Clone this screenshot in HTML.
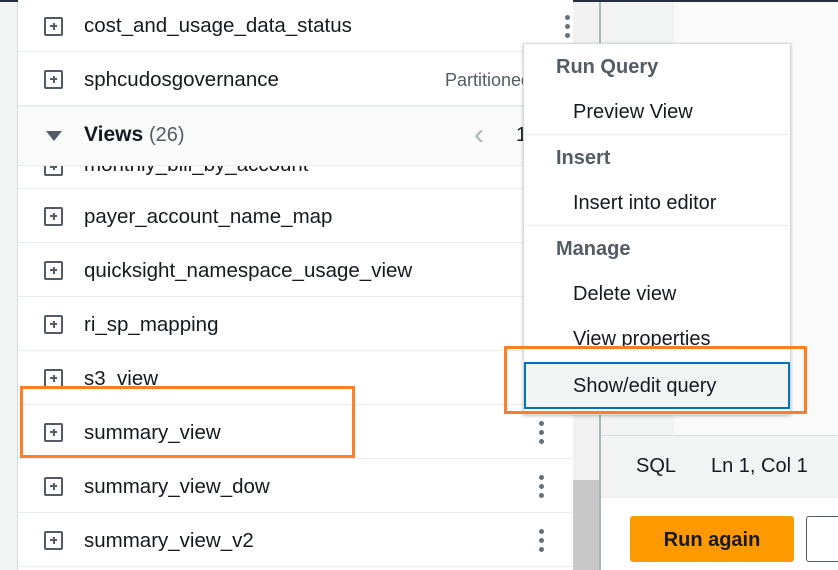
<!DOCTYPE html>
<html><head><meta charset="utf-8"><style>
*{margin:0;padding:0;box-sizing:border-box}
body{width:838px;height:570px;overflow:hidden;position:relative;background:#fafafa;font-family:"Liberation Sans",sans-serif;color:#16191f}
.abs{position:absolute}
.row{position:absolute;left:18px;width:555px;height:54px;border-bottom:1px solid #eaeded;background:#fff}
.row .ic{position:absolute;left:26px;top:50%;margin-top:-9px;width:19px;height:19px;border:2px solid #545b64;border-radius:2px}
.row .ic:before{content:"";position:absolute;left:4px;top:6.5px;width:7px;height:2px;background:#545b64}
.row .ic:after{content:"";position:absolute;left:6.5px;top:4px;width:2px;height:7px;background:#545b64}
.row .t{position:absolute;left:66px;top:1px;line-height:54px;font-size:20.5px}
.dots{position:absolute;width:4px}
.dots i{display:block;width:5px;height:5px;border-radius:50%;background:#687078;margin-bottom:4px}
.mh{position:absolute;left:32px;font-size:20px;font-weight:bold;color:#545b64}
.mi{position:absolute;left:49px;font-size:20px;color:#16191f}
</style></head><body>
<div class="abs" style="left:0;top:0;width:18px;height:570px;background:#f2f3f3;border-right:1px solid #d5dbdb"></div>
<div class="abs" style="left:18px;top:0;width:555px;height:570px;background:#fff"></div>
<div class="abs" style="left:573px;top:0;width:26px;height:570px;background:#f1f1f1"></div>
<div class="abs" style="left:573px;top:480px;width:26px;height:90px;background:#c8c8c8"></div>
<div class="abs" style="left:599px;top:0;width:2px;height:570px;background:#aab7b8"></div>
<div class="abs" style="left:601px;top:0;width:73px;height:435px;background:#f2f3f3"></div>
<div class="abs" style="left:601px;top:435px;width:237px;height:63px;background:#f2f3f3;border-top:1px solid #d5dbdb;border-bottom:1px solid #eaeded"></div>
<div class="abs" style="left:601px;top:498px;width:237px;height:72px;background:#fff"></div>
<div class="abs" style="left:636px;top:455px;font-size:20px">SQL</div>
<div class="abs" style="left:711px;top:455px;font-size:20px">Ln 1, Col 1</div>
<div class="abs" style="left:630px;top:516px;width:164px;height:46px;background:#ff9900;border-radius:3px;font-weight:bold;font-size:20px;text-align:center;line-height:48px">Run again</div>
<div class="abs" style="left:806px;top:516px;width:40px;height:46px;background:#fff;border:1px solid #545b64;border-radius:3px"></div>
<div class="abs" style="left:0;top:0;width:838px;height:2px;background:#232f3e"></div>

<div class="row" style="top:0;height:52px"><div class="ic"></div><div class="t" style="line-height:50px">cost_and_usage_data_status</div></div>
<div class="dots" style="left:565px;top:15px"><i></i><i></i><i></i></div>
<div class="row" style="top:52px"><div class="ic"></div><div class="t">sphcudosgovernance</div><div class="abs" style="left:427px;top:1px;line-height:54px;font-size:18px;color:#545b64">Partitioned</div></div>
<div class="row" style="top:166px;height:23px;overflow:hidden"><div class="ic" style="top:-9px;margin-top:0"></div><div class="t" style="top:-28px">monthly_bill_by_account</div></div>
<div class="abs" style="left:18px;top:106px;width:555px;height:60px;background:#fafafa;border-top:1px solid #eaeded;border-bottom:1px solid #eaeded"></div>
<div class="abs" style="left:46px;top:131px;width:0;height:0;border-left:8px solid transparent;border-right:8px solid transparent;border-top:10px solid #545b64"></div>
<div class="abs" style="left:84px;top:123px;font-size:21px;font-weight:bold">Views <span style="font-weight:normal;color:#545b64;font-size:20px">(26)</span></div>
<div class="abs" style="left:474px;top:118px;font-size:30px;color:#aab7b8">&#x2039;</div>
<div class="abs" style="left:516px;top:124px;font-size:20px">1</div>
<div class="row" style="top:189px"><div class="ic"></div><div class="t">payer_account_name_map</div></div>
<div class="row" style="top:243px"><div class="ic"></div><div class="t">quicksight_namespace_usage_view</div></div>
<div class="row" style="top:297px"><div class="ic"></div><div class="t">ri_sp_mapping</div></div>
<div class="row" style="top:351px"><div class="ic"></div><div class="t">s3_view</div></div>
<div class="row" style="top:405px"><div class="ic"></div><div class="t">summary_view</div></div>
<div class="row" style="top:459px"><div class="ic"></div><div class="t">summary_view_dow</div></div>
<div class="row" style="top:513px"><div class="ic"></div><div class="t">summary_view_v2</div></div>
<div class="dots" style="left:539px;top:421px"><i></i><i></i><i></i></div>
<div class="dots" style="left:539px;top:475px"><i></i><i></i><i></i></div>
<div class="dots" style="left:539px;top:529px"><i></i><i></i><i></i></div>

<div class="abs" style="left:523px;top:43px;width:268px;height:372px;background:#fff;border:1px solid #d5dbdb;box-shadow:0 1px 3px rgba(0,0,0,.25)">
<div class="mh" style="top:12px">Run Query</div>
<div class="mi" style="top:57px">Preview View</div>
<div class="abs" style="left:0;top:90px;width:266px;height:1px;background:#eaeded"></div>
<div class="mh" style="top:103px">Insert</div>
<div class="mi" style="top:148px">Insert into editor</div>
<div class="abs" style="left:0;top:181px;width:266px;height:1px;background:#eaeded"></div>
<div class="mh" style="top:194px">Manage</div>
<div class="mi" style="top:239px">Delete view</div>
<div class="mi" style="top:284px">View properties</div>
<div class="abs" style="left:0;top:318px;width:266px;height:47px;background:#f2f3f3;border:2px solid #0073bb"></div>
<div class="mi" style="top:331px">Show/edit query</div>
</div>

<div class="abs" style="left:504px;top:346px;width:303px;height:68px;border:3px solid #ff7f27"></div>
<div class="abs" style="left:20px;top:386px;width:335px;height:72px;border:3px solid #ff7f27"></div>
</body></html>
